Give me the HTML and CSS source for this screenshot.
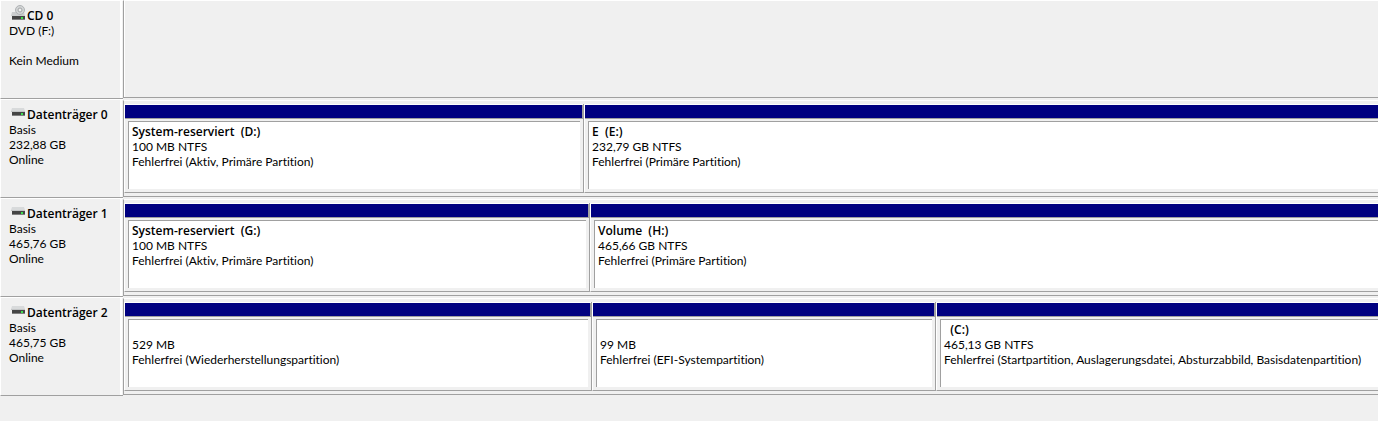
FILE: index.html
```html
<!DOCTYPE html>
<html lang="de">
<head>
    <meta charset="UTF-8">
    <meta name="viewport" content="width=device-width, initial-scale=1.0">
    <title>Datenträgerverwaltung</title>
    <link rel="stylesheet" href="styles.css">
</head>
<body>
    <!-- Symbole -->
    <svg class="symbols" aria-hidden="true">
        <symbol id="icon-disk" viewBox="0 0 14 16">
            <path d="M1 5h12l1 3v1H0V8z" fill="#d8dadb"/>
            <path d="M0 8h14v1H0z" fill="#c4c6c7"/>
            <path d="M1 9h13v3H1z" fill="#454545"/>
            <path d="M1 12h13v1H1z" fill="#808080"/>
            <path d="M10 10h2v2h-2z" fill="#3fe04f"/>
        </symbol>
        <symbol id="icon-cd" viewBox="0 0 14 16">
            <path d="M1 8h12l1 4H0z" fill="#cbcdce"/>
            <path d="M1 12h13v3H1z" fill="#454545"/>
            <path d="M1 15h13v1H1z" fill="#808080"/>
            <path d="M10 13h2v2h-2z" fill="#3fe04f"/>
            <circle cx="9" cy="6" r="4.5" fill="#d3d5d6" stroke="#b0b3b5"/>
            <circle cx="9" cy="6" r="2" fill="#f0f0f0" stroke="#a2a5a7"/>
        </symbol>
    </svg>

    <main class="disks">
        <!-- CD 0 -->
        <section class="disk">
            <div class="disk-info">
                <h2><svg class="icon"><use href="#icon-cd"/></svg>CD 0</h2>
                <p>DVD (F:)</p>
                <p></p>
                <p>Kein Medium</p>
            </div>
            <div class="volumes empty"></div>
        </section>

        <!-- Datenträger 0 -->
        <section class="disk">
            <div class="disk-info">
                <h2><svg class="icon"><use href="#icon-disk"/></svg>Datenträger 0</h2>
                <p>Basis</p>
                <p>232,88 GB</p>
                <p>Online</p>
            </div>
            <div class="volumes layout-0">
                <div class="volume">
                    <div class="bar"></div>
                    <div class="box">
                        <h3>System-reserviert  (D:)</h3>
                        <p>100 MB NTFS</p>
                        <p>Fehlerfrei (Aktiv, Primäre Partition)</p>
                    </div>
                </div>
                <div class="volume">
                    <div class="bar"></div>
                    <div class="box">
                        <h3>E  (E:)</h3>
                        <p>232,79 GB NTFS</p>
                        <p>Fehlerfrei (Primäre Partition)</p>
                    </div>
                </div>
            </div>
        </section>

        <!-- Datenträger 1 -->
        <section class="disk">
            <div class="disk-info">
                <h2><svg class="icon"><use href="#icon-disk"/></svg>Datenträger 1</h2>
                <p>Basis</p>
                <p>465,76 GB</p>
                <p>Online</p>
            </div>
            <div class="volumes layout-1">
                <div class="volume">
                    <div class="bar"></div>
                    <div class="box">
                        <h3>System-reserviert  (G:)</h3>
                        <p>100 MB NTFS</p>
                        <p>Fehlerfrei (Aktiv, Primäre Partition)</p>
                    </div>
                </div>
                <div class="volume">
                    <div class="bar"></div>
                    <div class="box">
                        <h3>Volume  (H:)</h3>
                        <p>465,66 GB NTFS</p>
                        <p>Fehlerfrei (Primäre Partition)</p>
                    </div>
                </div>
            </div>
        </section>

        <!-- Datenträger 2 -->
        <section class="disk">
            <div class="disk-info">
                <h2><svg class="icon"><use href="#icon-disk"/></svg>Datenträger 2</h2>
                <p>Basis</p>
                <p>465,75 GB</p>
                <p>Online</p>
            </div>
            <div class="volumes layout-2">
                <div class="volume">
                    <div class="bar"></div>
                    <div class="box">
                        <h3></h3>
                        <p>529 MB</p>
                        <p>Fehlerfrei (Wiederherstellungspartition)</p>
                    </div>
                </div>
                <div class="volume">
                    <div class="bar"></div>
                    <div class="box">
                        <h3></h3>
                        <p>99 MB</p>
                        <p>Fehlerfrei (EFI-Systempartition)</p>
                    </div>
                </div>
                <div class="volume">
                    <div class="bar"></div>
                    <div class="box">
                        <h3>  (C:)</h3>
                        <p>465,13 GB NTFS</p>
                        <p>Fehlerfrei (Startpartition, Auslagerungsdatei, Absturzabbild, Basisdatenpartition)</p>
                    </div>
                </div>
            </div>
        </section>
    </main>
</body>
</html>
```
FILE: styles.css
```css
* {
    box-sizing: border-box;
}
body {
    margin: 0;
    background-color: #f0f0f0;
    font-family: "Segoe UI", Lato, sans-serif;
    font-size: 12px;
    line-height: 15px;
    font-variant-ligatures: none;
    color: #000000;
}
h2, h3, p {
    margin: 0;
    min-height: 15px;
    font-size: 12px;
    white-space: pre;
}
h2, h3 {
    font-family: "Segoe UI", "Open Sans", sans-serif;
    font-weight: 600;
}
.symbols {
    display: none;
}

/* Zeile pro Datenträger */
.disk {
    display: grid;
    grid-template-columns: 123px minmax(0, 1fr);
}

/* Beschriftung links */
.disk-info {
    min-height: 99px;
    padding: 7px 0 0 8px;
    border-top: 1px solid #ffffff;
    border-left: 1px solid #ffffff;
    border-bottom: 1px solid #a0a0a0;
    box-shadow: inset -1px 0 #f0f0f0, inset -3px 0 #ffffff;
}
.disk-info h2 {
    display: flex;
}
.icon {
    width: 14px;
    height: 16px;
    margin: -4px 2px 0;
}

/* Partitionen */
.volumes {
    display: grid;
    margin-bottom: 1px;
    padding: 3px 0;
    border-top: 1px solid #ffffff;
    border-left: 1px solid #a0a0a0;
    border-bottom: 1px solid #a0a0a0;
}
.volumes.empty {
    box-shadow: inset 1px 0 #ffffff;
}
.disk + .disk .volumes {
    margin-top: 1px;
}
.layout-0 {
    grid-template-columns: 460fr 794fr;
}
.layout-1 {
    grid-template-columns: 466fr 788fr;
}
.layout-2 {
    grid-template-columns: 468fr 344fr 442fr;
}
.volume {
    display: flex;
    flex-direction: column;
    min-width: 0;
    border-left: 1px solid #ffffff;
    border-right: 1px solid #a0a0a0;
    border-bottom: 1px solid #a0a0a0;
}
.volume:last-child {
    border-right: none;
}
.bar {
    height: 15px;
    background-color: #000080;
    border-top: 1px solid #ffffff;
    border-bottom: 1px solid #a0a0a0;
}
.volume:not(:last-child) .bar {
    box-shadow: inset -1px 0 #a0a0a0;
}
.box {
    flex: 1;
    margin: 2px 3px 3px;
    padding: 2px 3px 0;
    background-color: #ffffff;
    border-top: 1px solid #a0a0a0;
    border-left: 1px solid #a0a0a0;
}
.volume:last-child .box {
    margin-right: 0;
}
```
